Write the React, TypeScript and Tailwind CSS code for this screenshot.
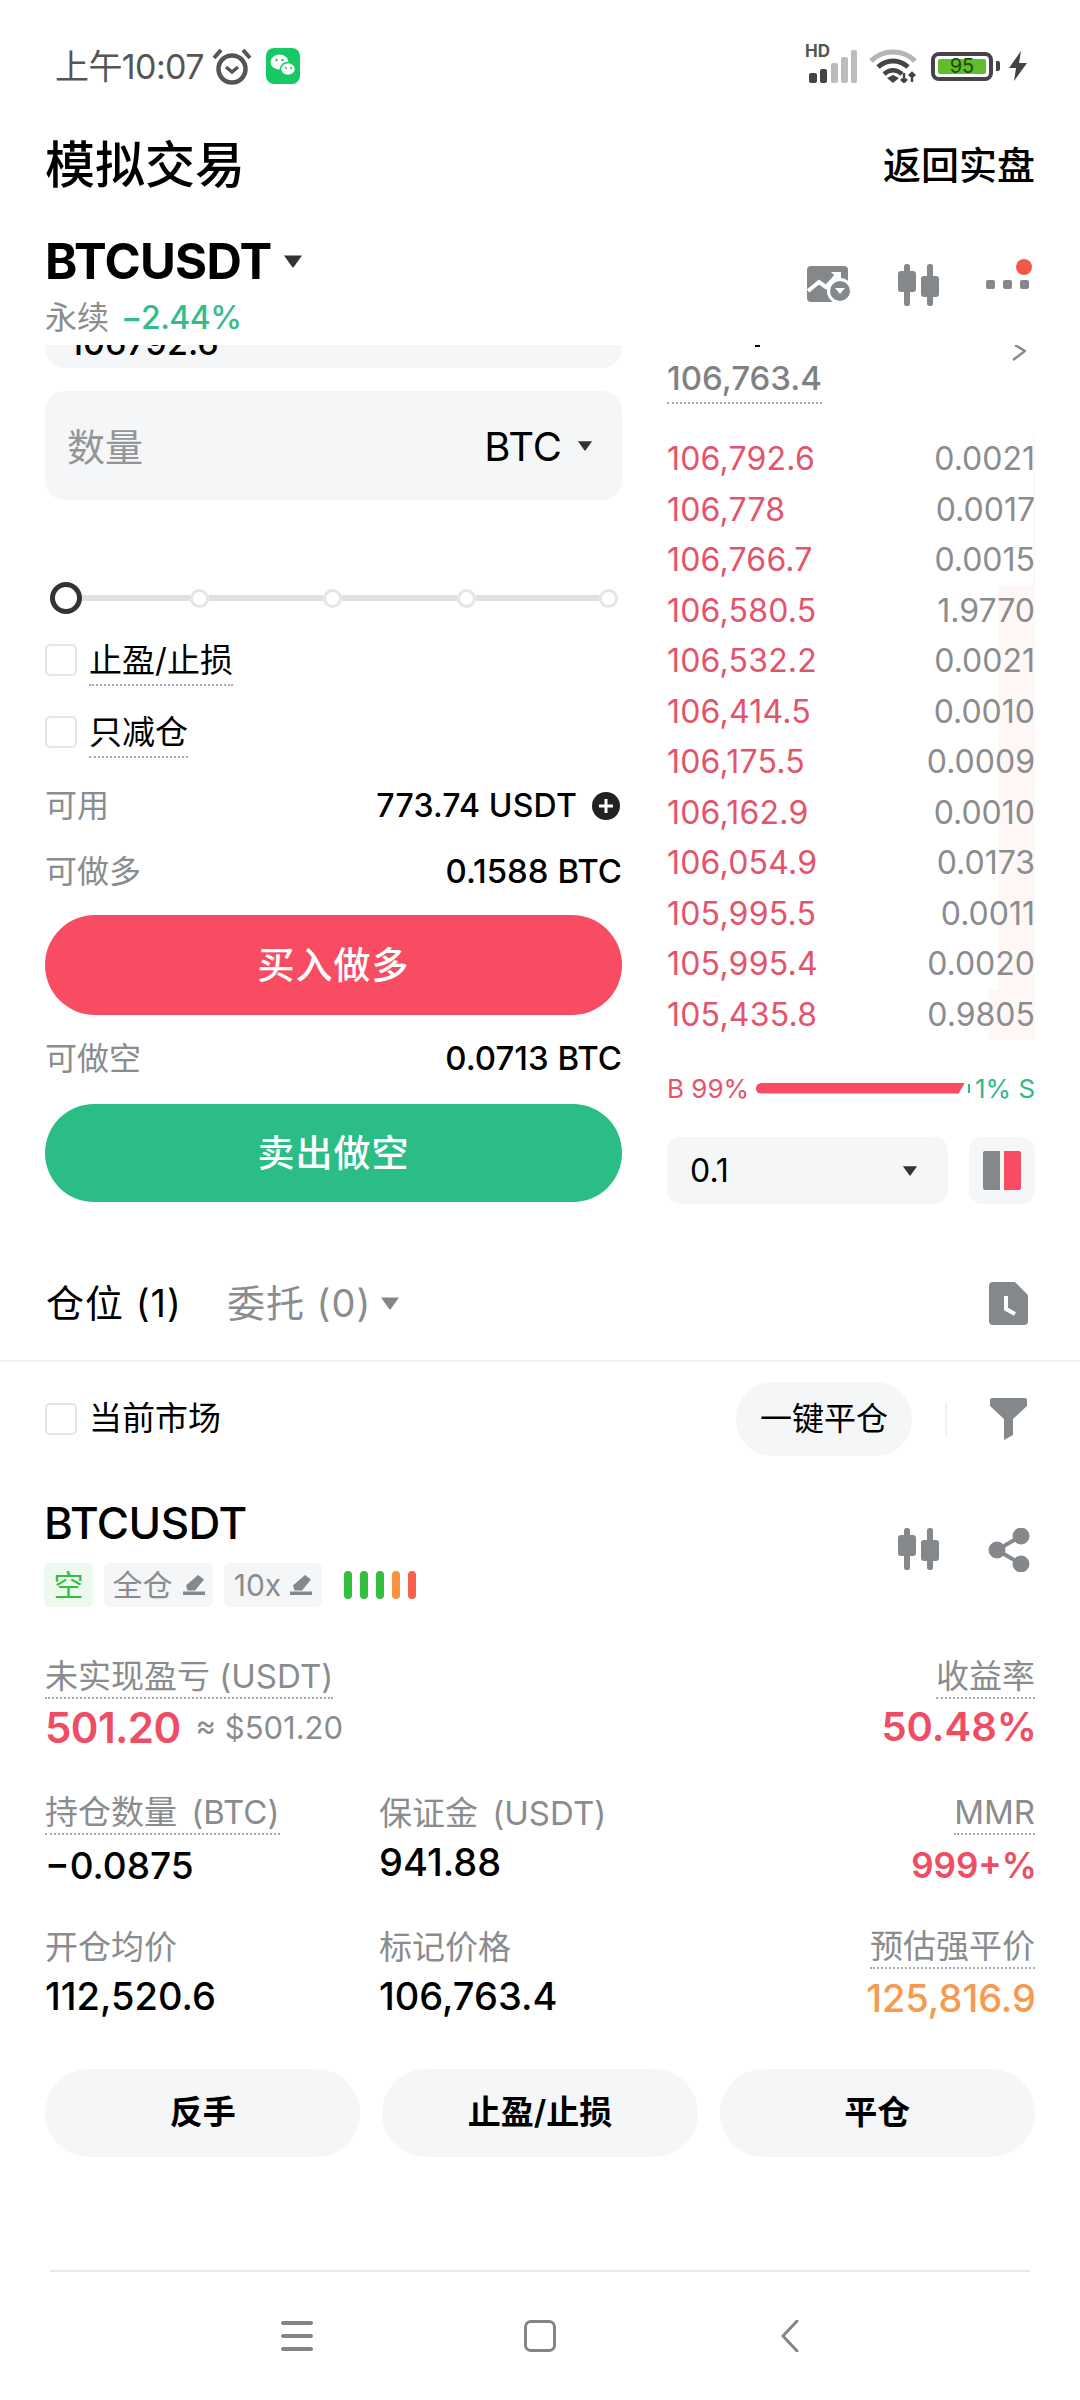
import React from "react";

const Tri = ({ className = "" }: { className?: string }) => (
  <svg viewBox="0 0 20 14" className={className} fill="currentColor"><path d="M1 1.5h18L10.8 13a1 1 0 0 1-1.6 0z" /></svg>
);

const Candle = ({ className = "" }: { className?: string }) => (
  <svg viewBox="0 0 42 42" className={className} fill="#85888b">
    <rect x="6" y="0" width="6" height="42" rx="2.5" />
    <rect x="0" y="7" width="18" height="21" rx="3" />
    <rect x="29" y="0" width="6" height="42" rx="2.5" />
    <rect x="23" y="12" width="18" height="21" rx="3" />
  </svg>
);

const Pencil = () => (
  <svg viewBox="0 0 22 20" className="w-[22px] h-[20px]" fill="#85888b"><path d="M15 0l6 4.500-9 11H4.500L3 10.500zM0 16.500h22V20H0z" /></svg>
);

const asks: [string, string, number][] = [
  ["106,792.6", "0.0021", 2],
  ["106,778", "0.0017", 2],
  ["106,766.7", "0.0015", 2],
  ["106,580.5", "1.9770", 37],
  ["106,532.2", "0.0021", 37],
  ["106,414.5", "0.0010", 37],
  ["106,175.5", "0.0009", 37],
  ["106,162.9", "0.0010", 37],
  ["106,054.9", "0.0173", 37],
  ["105,995.5", "0.0011", 37],
  ["105,995.4", "0.0020", 37],
  ["105,435.8", "0.9805", 47],
];

const Check = () => <span className="w-[32px] h-[32px] rounded-[5px] border-2 border-[#e4e6e6] bg-white shrink-0" />;
const Dot = () => <span className="w-[19px] h-[19px] rounded-full border-[3px] border-[#e4e6e6] bg-white shrink-0" />;
const Dotted = "border-b-2 border-dotted border-[#a9abad]";

const Stat = ({ label, value, cls = "text-[38px] text-black", right = false, dotted = false }: { label: string; value: string; cls?: string; right?: boolean; dotted?: boolean }) => (
  <div className={`flex flex-col ${right ? "items-end" : "items-start"}`}>
    <div className={`h-[44px] pt-[2px] flex items-center text-[33px] text-[#8a8c8e] [word-spacing:5px] ${dotted ? Dotted : ""}`}>{label}</div>
    <div className={`h-[56px] flex items-center font-medium ${cls}`}>{value}</div>
  </div>
);

export default function App() {
  return (
    <div className="w-[1080px] h-[2400px] bg-white flex flex-col overflow-hidden font-['Inter','Noto_Sans_CJK_SC',sans-serif] text-black">
      {/* status bar */}
      <div className="h-[132px] shrink-0 flex items-center justify-between pl-[55px] pr-[52px]">
        <div className="flex items-center">
          <span className="text-[34px] text-[#555] tracking-[-0.6px] w-[157px]">上午10:07</span>
          <svg viewBox="0 0 40 40" className="w-[40px] h-[40px]" fill="none" stroke="#555" strokeWidth="4.500">
            <circle cx="20" cy="23" r="13.500" />
            <path d="M14 21l6 5 6-5" strokeWidth="3.500" />
            <path d="M2 12 9 4M38 12 31 4" strokeWidth="4" />
          </svg>
          <svg viewBox="0 0 34 36" className="w-[34px] h-[36px] ml-[14px]">
            <rect width="34" height="36" rx="8" fill="#16c964" />
            <ellipse cx="13.500" cy="14" rx="9" ry="7.500" fill="#fff" />
            <ellipse cx="22" cy="21" rx="7.500" ry="6.500" fill="#fff" stroke="#16c964" strokeWidth="1.500" />
            <circle cx="10.500" cy="12" r="1.200" fill="#16c964" />
            <circle cx="16.500" cy="12" r="1.200" fill="#16c964" />
            <circle cx="20" cy="20" r="1" fill="#16c964" />
            <circle cx="25" cy="20" r="1" fill="#16c964" />
          </svg>
        </div>
        <div className="flex items-center">
          <div className="relative w-[50px] h-[34px]">
            <span className="absolute left-[-3px] top-[-7px] text-[17px] leading-[18px] font-bold text-[#555]">HD</span>
            <svg viewBox="0 0 50 34" className="w-[50px] h-[34px]">
              <rect x="1" y="24" width="8" height="10" rx="2" fill="#444" />
              <rect x="12" y="20" width="7" height="14" rx="2" fill="#444" />
              <rect x="23" y="14" width="7" height="20" rx="2" fill="#bcbcbc" />
              <rect x="33" y="8" width="7" height="26" rx="2" fill="#bcbcbc" />
              <rect x="43" y="1" width="6" height="33" rx="2" fill="#bcbcbc" />
            </svg>
          </div>
          <svg viewBox="0 0 48 34" className="w-[48px] h-[34px] ml-[11px]" fill="none">
            <path d="M2 12C14 0 34 0 46 12" stroke="#b5b5b5" strokeWidth="5" />
            <path d="M9 18c9-8 21-8 30 0" stroke="#444" strokeWidth="5" />
            <path d="M15 25c6-5 12-5 18 0" stroke="#444" strokeWidth="4.500" />
            <path d="M18 29l6-3 6 3-6 5z" fill="#444" />
            <path d="M35 24v9M43 24v9M32 30l3 3 3-3M40 27l3-3 3 3" stroke="#444" strokeWidth="2.500" />
          </svg>
          <div className="ml-[14px] w-[62px] h-[29px] border-[4px] border-[#444] rounded-[8px] p-[3px] flex">
            <div className="flex-1 bg-[#62bd2c] rounded-[2px] flex items-center justify-center text-[20px] leading-none text-[#1c4a10]">95</div>
          </div>
          <span className="ml-[3px] w-[4px] h-[10px] bg-[#444] rounded-r-[2px]" />
          <svg viewBox="0 0 20 30" className="w-[20px] h-[30px] ml-[8px]" fill="#444"><path d="M13 0 1 17h7L6 30l13-18h-8z" /></svg>
        </div>
      </div>

      {/* title */}
      <div className="h-[66px] shrink-0 flex items-center justify-between px-[45px]">
        <span className="text-[50px] font-medium">模拟交易</span>
        <span className="text-[38px] font-medium">返回实盘</span>
      </div>

      {/* symbol */}
      <div className="mt-[32px] h-[115px] shrink-0 flex justify-between pl-[45px] pr-[51px]">
        <div className="flex flex-col">
          <div className="h-[64px] flex items-center">
            <span className="text-[49px] font-bold tracking-[-0.7px]">BTCUSDT</span>
            <Tri className="w-[20px] h-[14px] ml-[11px] mb-[3px] text-[#333]" />
          </div>
          <div className="h-[48px] flex items-center text-[32px]">
            <span className="text-[#8a8c8e]">永续</span>
            <span className="ml-[12px] text-[#32bd8c] font-medium tracking-[-0.5px]">−2.44%</span>
          </div>
        </div>
        <div className="flex items-start pt-[34px]">
          <svg viewBox="0 0 46 40" className="w-[46px] h-[40px]">
            <rect x="0" y="2" width="41" height="36" rx="4" fill="#85888b" />
            <path d="M1 27l11-9 7 5 11-12" fill="none" stroke="#fff" strokeWidth="4" />
            <path d="M24 8h10v10z" fill="#fff" />
            <circle cx="33" cy="27" r="13" fill="#fff" />
            <circle cx="33" cy="27" r="10" fill="#85888b" />
            <path d="M28 24h10l-5 6z" fill="#fff" />
          </svg>
          <Candle className="w-[42px] h-[42px] ml-[45px]" />
          <div className="relative w-[43px] h-[42px] ml-[46px]">
            <svg viewBox="0 0 43 42" className="w-[43px] h-[42px]" fill="#85888b">
              <rect x="0" y="16" width="9" height="9" rx="2" />
              <rect x="17" y="16" width="9" height="9" rx="2" />
              <rect x="34" y="16" width="9" height="9" rx="2" />
            </svg>
            <span className="absolute right-[-3px] top-[-5px] w-[16px] h-[16px] rounded-full bg-[#f2584a]" />
          </div>
        </div>
      </div>

      {/* trade + book */}
      <div className="shrink-0 flex pl-[45px] pr-[45px] justify-between">
        <div className="w-[577px] flex flex-col">
          <div className="h-[23px] bg-[#f4f6f7] rounded-b-[20px] overflow-hidden pl-[24px] text-[34px] leading-[23px] font-medium">
            <div className="mt-[-24px] h-[44px] leading-[44px]">106792.6</div>
          </div>
          <div className="mt-[23px] h-[109px] bg-[#f4f6f7] rounded-[20px] flex items-center justify-between pl-[22px] pr-[29px]">
            <span className="text-[38px] text-[#939598] pt-[3px]">数量</span>
            <span className="flex items-center">
              <span className="text-[40px] pt-[2px]">BTC</span>
              <Tri className="w-[16px] h-[11px] ml-[15px] text-[#333]" />
            </span>
          </div>
          <div className="mt-[82px] h-[32px] flex items-center pl-[5px] pr-[4px]">
            <span className="w-[32px] h-[32px] rounded-full border-[5px] border-[#333] bg-white shrink-0" />
            <span className="w-[108px] h-[6px] bg-[#dfe1e1]" />
            <Dot />
            <span className="w-[114px] h-[6px] bg-[#dfe1e1]" />
            <Dot />
            <span className="w-[115px] h-[6px] bg-[#dfe1e1]" />
            <Dot />
            <span className="flex-1 h-[6px] bg-[#dfe1e1]" />
            <Dot />
          </div>
          <div className="mt-[19px] h-[54px] flex items-center">
            <Check />
            <span className={`ml-[12px] h-[52px] pt-[4px] flex items-center text-[33px] ${Dotted}`}>止盈/止损</span>
          </div>
          <div className="mt-[18px] h-[54px] flex items-center">
            <Check />
            <span className={`ml-[12px] h-[52px] pt-[4px] flex items-center text-[33px] ${Dotted}`}>只减仓</span>
          </div>
          <div className="mt-[22px] h-[50px] flex items-center justify-between">
            <span className="text-[32px] text-[#8a8c8e]">可用</span>
            <span className="flex items-center">
              <span className="text-[32px] font-medium tracking-[0.2px]">773.74 USDT</span>
              <svg viewBox="0 0 28 28" className="w-[28px] h-[28px] ml-[15px] mr-[2px]">
                <circle cx="14" cy="14" r="14" fill="#222" />
                <path d="M14 7v14M7 14h14" stroke="#fff" strokeWidth="3" />
              </svg>
            </span>
          </div>
          <div className="mt-[16px] h-[50px] flex items-center justify-between">
            <span className="text-[32px] text-[#8a8c8e]">可做多</span>
            <span className="text-[33px] font-medium">0.1588 BTC</span>
          </div>
          <div className="mt-[18px] h-[100px] rounded-full bg-[#f84c62] flex items-center justify-center text-white text-[37px] font-medium tracking-[1px] pt-[2px]">买入做多</div>
          <div className="mt-[19px] h-[50px] flex items-center justify-between">
            <span className="text-[32px] text-[#8a8c8e]">可做空</span>
            <span className="text-[33px] font-medium">0.0713 BTC</span>
          </div>
          <div className="mt-[20px] h-[98px] rounded-full bg-[#2abd85] flex items-center justify-center text-white text-[37px] font-medium tracking-[1px] pt-[2px]">卖出做空</div>
        </div>

        <div className="w-[368px] flex flex-col">
          <div className="h-[11px] flex justify-between items-start pl-[88px]">
            <span className="w-[5px] h-[2px] bg-black" />
            <svg viewBox="0 0 14 16" className="w-[14px] h-[16px] mr-[9px]" fill="none" stroke="#85888b" strokeWidth="2.500"><path d="M3 0l10 6L1 15" /></svg>
          </div>
          <div className={`self-start h-[48px] flex items-center text-[33px] font-medium text-[#7f8284] ${Dotted}`}>106,763.4</div>
          <div className="mt-[30px] flex flex-col">
            {asks.map(([p, q, w]) => (
              <div key={p} className="relative h-[50.5px] flex items-center justify-between text-[32px]">
                <span className="absolute right-0 top-0 bottom-0 bg-[#fef7f6]" style={{ width: w }} />
                <span className="relative text-[#e5536a] tracking-[0.2px]">{p}</span>
                <span className="relative text-[#8a8c8e]">{q}</span>
              </div>
            ))}
          </div>
          <div className="mt-[28px] h-[40px] flex items-center text-[26px]">
            <span className="text-[#e5536a] w-[89px] shrink-0">B 99%</span>
            <span className="flex-1 h-[11px] bg-[#f84c62] rounded-l-full [clip-path:polygon(0_0,100%_0,97%_100%,0_100%)]" />
            <span className="ml-[3px] w-[2px] h-[9px] bg-[#2abd85]" />
            <span className="ml-[5px] text-[#2fb98a] w-[60px] shrink-0 text-right whitespace-nowrap">1% S</span>
          </div>
          <div className="mt-[29px] flex justify-between">
            <div className="w-[281px] h-[67px] rounded-[14px] bg-[#f4f6f7] flex items-center justify-between pl-[23px] pr-[30px]">
              <span className="text-[32px]">0.1</span>
              <Tri className="w-[16px] h-[11px] text-[#333]" />
            </div>
            <div className="w-[66px] h-[67px] rounded-[14px] bg-[#f4f6f7] flex items-center justify-center gap-[4px]">
              <span className="w-[17px] h-[39px] bg-[#85888b] rounded-l-[2px]" />
              <span className="w-[17px] h-[39px] bg-[#f84c62] rounded-r-[2px]" />
            </div>
          </div>
        </div>
      </div>

      {/* tabs */}
      <div className="mt-[59px] h-[80px] shrink-0 flex items-center justify-between pl-[46px] pr-[52px]">
        <div className="flex items-center text-[38px] tracking-[1px]">
          <span>仓位 (1)</span>
          <span className="ml-[45px] text-[#8a8c8e]">委托 (0)</span>
          <Tri className="w-[20px] h-[14px] ml-[9px] text-[#85888b]" />
        </div>
        <svg viewBox="0 0 39 43" className="w-[39px] h-[43px]">
          <path d="M4 0h20a4 4 0 0 1 3 1l11 11a4 4 0 0 1 1 3v24a4 4 0 0 1-4 4H4a4 4 0 0 1-4-4V4a4 4 0 0 1 4-4z" fill="#85888b" />
          <path d="M17 14v13l9 5" fill="none" stroke="#fff" strokeWidth="4" />
        </svg>
      </div>
      <div className="mt-[17px] h-[2px] shrink-0 bg-[#f1f2f2]" />

      {/* filter */}
      <div className="mt-[20px] h-[74px] shrink-0 flex items-center justify-between pl-[45px] pr-[53px]">
        <div className="flex items-center">
          <Check />
          <span className="ml-[12px] text-[33px]">当前市场</span>
        </div>
        <div className="flex items-center">
          <span className="w-[176px] h-[74px] rounded-full bg-[#f4f6f7] flex items-center justify-center text-[32px]">一键平仓</span>
          <span className="ml-[33px] w-[2px] h-[33px] bg-[#f0f1f1]" />
          <svg viewBox="0 0 37 42" className="w-[37px] h-[42px] ml-[43px]" fill="#85888b"><path d="M2 0h33a2 2 0 0 1 2 2v6L23 21v16l-9 5V21L0 8V2a2 2 0 0 1 2-2z" /></svg>
        </div>
      </div>

      {/* position */}
      <div className="mt-[42px] shrink-0 flex justify-between pl-[44px] pr-[50px]">
        <div className="flex flex-col">
          <div className="h-[50px] flex items-center text-[44px] font-medium tracking-[-0.5px]">BTCUSDT</div>
          <div className="mt-[15px] h-[44px] flex items-center text-[30px]">
            <span className="w-[49px] h-[44px] rounded-[6px] bg-[#edf9ee] text-[#33bd45] flex items-center justify-center">空</span>
            <span className="ml-[11px] w-[109px] h-[44px] rounded-[6px] bg-[#f4f6f7] text-[#8a8c8e] flex items-center justify-center gap-[10px]">全仓<Pencil /></span>
            <span className="ml-[11px] w-[98px] h-[44px] rounded-[6px] bg-[#f4f6f7] text-[#8a8c8e] flex items-center justify-center gap-[9px]">10x<Pencil /></span>
            <span className="ml-[22px] flex gap-[8px]">
              <span className="w-[8px] h-[28px] rounded-full bg-[#2fbf3a]" />
              <span className="w-[8px] h-[28px] rounded-full bg-[#2fbf3a]" />
              <span className="w-[8px] h-[28px] rounded-full bg-[#2fbf3a]" />
              <span className="w-[8px] h-[28px] rounded-full bg-[#fb9040]" />
              <span className="w-[8px] h-[28px] rounded-full bg-[#f8604a]" />
            </span>
          </div>
        </div>
        <div className="flex pt-[30px] items-start">
          <Candle className="w-[42px] h-[42px]" />
          <svg viewBox="0 0 42 44" className="w-[42px] h-[44px] ml-[48px]" fill="#85888b" stroke="#85888b">
            <circle cx="9" cy="22" r="8" />
            <circle cx="33" cy="8" r="8" />
            <circle cx="33" cy="36" r="8" />
            <path d="M9 22 33 8M9 22l24 14" strokeWidth="4" fill="none" />
          </svg>
        </div>
      </div>

      {/* stats */}
      <div className="mt-[48px] shrink-0 px-[45px] flex flex-col">
        <div className="flex justify-between">
          <div className="flex flex-col items-start">
            <div className={`h-[44px] pt-[2px] flex items-center text-[33px] text-[#8a8c8e] ${Dotted}`}>未实现盈亏 (USDT)</div>
            <div className="h-[56px] flex items-center">
              <span className="text-[42px] font-semibold text-[#ee4d63] tracking-[-0.6px]">501.20</span>
              <span className="ml-[15px] text-[31px] text-[#8a8c8e] pt-[2px]">≈ $501.20</span>
            </div>
          </div>
          <div className="flex flex-col items-end">
            <div className={`h-[44px] pt-[2px] flex items-center text-[33px] text-[#8a8c8e] ${Dotted}`}>收益率</div>
            <div className="h-[56px] mr-[-2px] flex items-center text-[40px] font-semibold text-[#ee4d63]">50.48%</div>
          </div>
        </div>
        <div className="mt-[36px] grid grid-cols-[334px_1fr_auto]">
          <Stat label="持仓数量 (BTC)" value="−0.0875" cls="text-[37px] text-black pt-[6px]" dotted />
          <Stat label="保证金 (USDT)" value="941.88" cls="text-[38px] text-black pb-[2px]" />
          <Stat label="MMR" value="999+%" cls="text-[35px] font-semibold text-[#ee4d63] mr-[-2px] pt-[4px]" right dotted />
        </div>
        <div className="mt-[34px] grid grid-cols-[334px_1fr_auto]">
          <Stat label="开仓均价" value="112,520.6" cls="text-[38px] text-black pb-[2px]" />
          <Stat label="标记价格" value="106,763.4" cls="text-[38px] text-black pb-[2px]" />
          <Stat label="预估强平价" value="125,816.9" cls="text-[38px] text-[#f79a50] mr-[-1px] pt-[3px]" right dotted />
        </div>
      </div>

      {/* actions */}
      <div className="mt-[44px] shrink-0 px-[45px] grid grid-cols-3 gap-[22px]">
        {["反手", "止盈/止损", "平仓"].map((t) => (
          <div key={t} className="h-[88px] rounded-full bg-[#f4f6f7] flex items-center justify-center text-[33px] font-semibold">{t}</div>
        ))}
      </div>

      {/* nav */}
      <div className="mt-[113px] mx-[50px] h-[2px] shrink-0 bg-[#e8e8e8]" />
      <div className="mt-[48px] shrink-0 flex justify-center items-center h-[32px]">
        <div className="w-[32px] flex flex-col gap-[9px]">
          <span className="h-[4px] bg-[#858585] rounded-full" />
          <span className="h-[4px] bg-[#858585] rounded-full" />
          <span className="h-[4px] bg-[#858585] rounded-full" />
        </div>
        <span className="ml-[211px] w-[32px] h-[32px] rounded-[7px] border-[3.5px] border-[#858585]" />
        <svg viewBox="0 0 18 32" className="ml-[225px] w-[18px] h-[32px]" fill="none" stroke="#858585" strokeWidth="3" strokeLinecap="round"><path d="M16 1 2 16l14 15" /></svg>
      </div>
    </div>
  );
}
